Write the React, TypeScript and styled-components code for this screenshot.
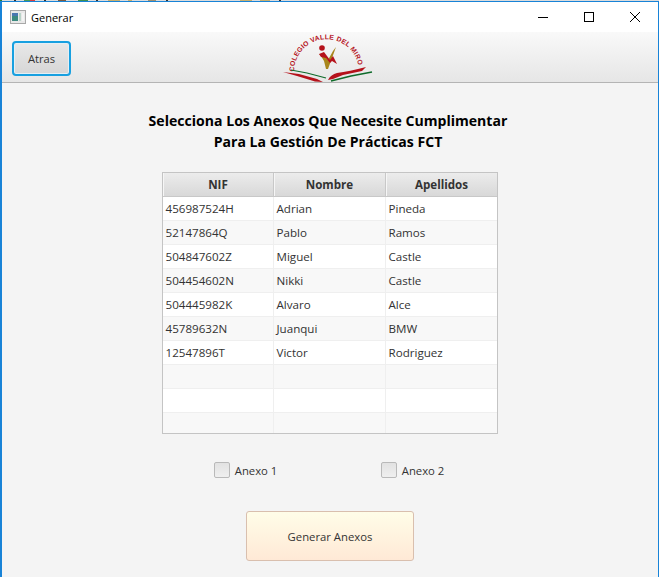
import React from "react";
import styled, { createGlobalStyle } from "styled-components";

const Global = createGlobalStyle`
  html, body { margin: 0; padding: 0; background: #f4f4f4; }
  body { font-family: "Open Sans", "Noto Sans", sans-serif; font-size: 11.3px; color: #333; overflow: hidden; }
`;

const Desktop = styled.div`
  height: 577px;
  width: 659px;
  display: flex;
  flex-direction: column;
`;

const DesktopStrip = styled.div`
  height: 1px;
  flex: none;
  background: linear-gradient(90deg,
    #2a7d3c 0 2px, #dcdcdc 2px 14px, #333 14px 16px, #dcdcdc 16px 24px, #4a9a58 24px 30px, #d94040 30px 35px,
    #dcdcdc 35px 44px, #333 44px 46px, #dcdcdc 46px 58px, #7a5a40 58px 66px, #dcdcdc 66px 78px, #3f8f50 78px 88px,
    #dcdcdc 88px 96px, #333 96px 98px, #dcdcdc 98px 108px, #c8b070 108px 120px, #dcdcdc 120px 128px, #c8b070 128px 132px,
    #dcdcdc 132px 148px, #a09070 148px 156px, #dcdcdc 156px 166px, #333 166px 168px, #dcdcdc 168px 240px, #c8b070 240px 252px,
    #dcdcdc 252px 260px, #c8b070 260px 270px, #dcdcdc 270px 279px, #333 279px 281px, #dcdcdc 281px 659px);
`;

const Win = styled.div`
  flex: 1;
  display: flex;
  flex-direction: column;
  min-height: 0;
  border-top: 1px solid #1883d7;
  border-left: 2px solid #1883d7;
  border-right: 1px solid #1883d7;
  background: #f4f4f4;
`;

const TitleBar = styled.div`
  height: 30px;
  flex: none;
  background: #fff;
  display: flex;
  align-items: center;
  padding-left: 8px;
`;

const AppIcon = styled.svg`
  width: 16px;
  height: 14px;
  flex: none;
  margin-right: 5px;
`;

const TitleText = styled.span`
  font-size: 11px;
  color: #000;
  flex: 1;
`;

const WinButton = styled.div`
  width: 46px;
  height: 30px;
  display: flex;
  align-items: center;
  justify-content: center;
`;

const Toolbar = styled.div`
  height: 51px;
  flex: none;
  box-sizing: border-box;
  border-bottom: 1px solid #b4b4b4;
  background: linear-gradient(#f9f9f9, #e6e6e6);
  display: grid;
  grid-template-columns: 1fr auto 1fr;
  align-items: center;
  padding-left: 10px;
`;

const BackButton = styled.button`
  justify-self: start;
  width: 59px;
  height: 35px;
  margin-top: 2px;
  box-sizing: border-box;
  border: 2px solid #18a0e0;
  border-radius: 4px;
  box-shadow: inset 0 0 0 1px #e4eff5;
  background: linear-gradient(#e8e8e8, #d6d6d6);
  font: inherit;
  font-size: 11.2px;
  color: #333;
  padding: 0;
`;

const Logo = styled.svg`
  width: 90px;
  height: 50px;
  display: block;
  margin-right: 15px;
`;

const Content = styled.main`
  flex: 1;
  display: flex;
  flex-direction: column;
  align-items: center;
  padding-right: 1px;
  padding-top: 27px;
`;

const Heading = styled.h1`
  margin: 0 3px 0 0;
  font-size: 14.08px;
  line-height: 21px;
  font-weight: 700;
  color: #000;
  text-align: center;
`;

const TableFrame = styled.div`
  margin-top: 20px;
  width: 336px;
  height: 262px;
  box-sizing: border-box;
  border: 1px solid #c4c4c4;
  overflow: hidden;
  background: #fff;
`;

const Cols = styled.div`
  display: grid;
  grid-template-columns: 111px 112px 1fr;
`;

const HeaderRow = styled(Cols)`
  height: 24px;
  box-sizing: border-box;
  border-bottom: 1px solid #c8c8c8;
`;

const HeaderCell = styled.div`
  background: linear-gradient(#ececec, #d8d8d8);
  border-right: 1px solid #c8c8c8;
  border-left: 1px solid #f6f6f6;
  font-size: 11.6px;
  font-weight: 700;
  color: #333;
  display: flex;
  align-items: center;
  justify-content: center;
  &:last-child { border-right: none; }
`;

const Row = styled(Cols)<{ $odd: boolean }>`
  height: 24px;
  box-sizing: border-box;
  background: ${(p) => (p.$odd ? "#f8f8f8" : "#fff")};
  border-bottom: 1px solid #efefef;
`;

const Cell = styled.div`
  border-right: 1px solid #efefef;
  padding-left: 3px;
  font-size: 11.6px;
  line-height: 23px;
  color: #333;
  &:last-child { border-right: none; }
`;

const Checks = styled.div`
  margin-top: 28px;
  margin-left: -1px;
  display: grid;
  grid-template-columns: 167px auto;
`;

const CheckLabel = styled.label`
  display: flex;
  align-items: center;
  gap: 5px;
  height: 16px;
  color: #333;
`;

const Box = styled.span`
  width: 16px;
  height: 16px;
  box-sizing: border-box;
  border: 1px solid #b9b9b9;
  border-radius: 2px;
  background: linear-gradient(#e2e2e2, #efefef);
`;

const GenerateButton = styled.button`
  margin-top: 33px;
  margin-left: 1px;
  width: 168px;
  height: 50px;
  box-sizing: border-box;
  border: 1px solid #d9bfae;
  border-radius: 3px;
  background: linear-gradient(#fffde8, #ffe9d6);
  font: inherit;
  color: #333;
`;

const rows = [
  ["456987524H", "Adrian", "Pineda"],
  ["52147864Q", "Pablo", "Ramos"],
  ["504847602Z", "Miguel", "Castle"],
  ["504454602N", "Nikki", "Castle"],
  ["504445982K", "Alvaro", "Alce"],
  ["45789632N", "Juanqui", "BMW"],
  ["12547896T", "Victor", "Rodriguez"],
  ["", "", ""],
  ["", "", ""],
  ["", "", ""],
];

const red = "#b5121b";
const green = "#0e6b2a";

export default function App() {
  return (
    <Desktop>
      <Global />
      <DesktopStrip />
      <Win>
        <TitleBar>
          <AppIcon viewBox="0 0 16 14">
            <rect x="0.5" y="0.5" width="15" height="13" fill="#e8e8e8" stroke="#a8a8a8" />
            <rect x="2" y="3" width="6" height="8" fill="#3d8a80" />
            <rect x="2" y="3" width="6" height="3" fill="#4a78b0" />
            <rect x="9" y="3" width="2" height="8" fill="#b8d4c8" />
            <rect x="12" y="3" width="2" height="8" fill="#f4f4f4" />
          </AppIcon>
          <TitleText>Generar</TitleText>
          <WinButton>
            <svg width="10" height="10" viewBox="0 0 10 10"><path d="M0 5.5h10" stroke="#000" fill="none" /></svg>
          </WinButton>
          <WinButton>
            <svg width="10" height="10" viewBox="0 0 10 10"><rect x="0.5" y="0.5" width="9" height="9" stroke="#000" fill="none" /></svg>
          </WinButton>
          <WinButton>
            <svg width="10" height="10" viewBox="0 0 10 10"><path d="M0 0l10 10M10 0L0 10" stroke="#000" strokeWidth="1" fill="none" /></svg>
          </WinButton>
        </TitleBar>
        <Toolbar>
          <BackButton>Atras</BackButton>
          <Logo viewBox="0 0 90 50">
            <path id="logoArc" d="M11 39.7A32.5 32.5 0 0 1 76 39.7" fill="none" />
            <text fontFamily="Liberation Sans, sans-serif" fontSize="6.8" fontWeight="700" fill={red} letterSpacing="0.25">
              <textPath href="#logoArc">COLEGIO VALLE DEL MIRO</textPath>
            </text>
            <circle cx="39" cy="16" r="2.8" fill={red} />
            <path d="M36 22l6 2 3 4 5-9 3-4-4 11-4 11-2 0-2-8-3-5z" fill="#a8861c" />
            <path d="M36 22l5-2 3 4 3 4 3-4 4 8-5-3-2 2-4-5-5-1z" fill={red} />
            <path d="M0 40L16 42L34 47L40 50L32 49.5L14 44z" fill={red} />
            <path d="M8 38L24 41L43 46" stroke={green} strokeWidth="1.2" fill="none" />
            <path d="M45 48C47 44 50 42 54 41C62 40 72 38 83 35L79 39L60 43L50 47z" fill={red} />
            <path d="M48 49L68 44L89 40" stroke={green} strokeWidth="1.4" fill="none" />
          </Logo>
          <span />
        </Toolbar>
        <Content>
          <Heading>
            Selecciona Los Anexos Que Necesite Cumplimentar
            <br />
            Para La Gestión De Prácticas FCT
          </Heading>
          <TableFrame>
            <HeaderRow>
              <HeaderCell>NIF</HeaderCell>
              <HeaderCell>Nombre</HeaderCell>
              <HeaderCell>Apellidos</HeaderCell>
            </HeaderRow>
            {rows.map((r, i) => (
              <Row key={i} $odd={i % 2 === 1}>
                {r.map((c, j) => (
                  <Cell key={j}>{c}</Cell>
                ))}
              </Row>
            ))}
          </TableFrame>
          <Checks>
            <CheckLabel><Box />Anexo 1</CheckLabel>
            <CheckLabel><Box />Anexo 2</CheckLabel>
          </Checks>
          <GenerateButton>Generar Anexos</GenerateButton>
        </Content>
      </Win>
    </Desktop>
  );
}
